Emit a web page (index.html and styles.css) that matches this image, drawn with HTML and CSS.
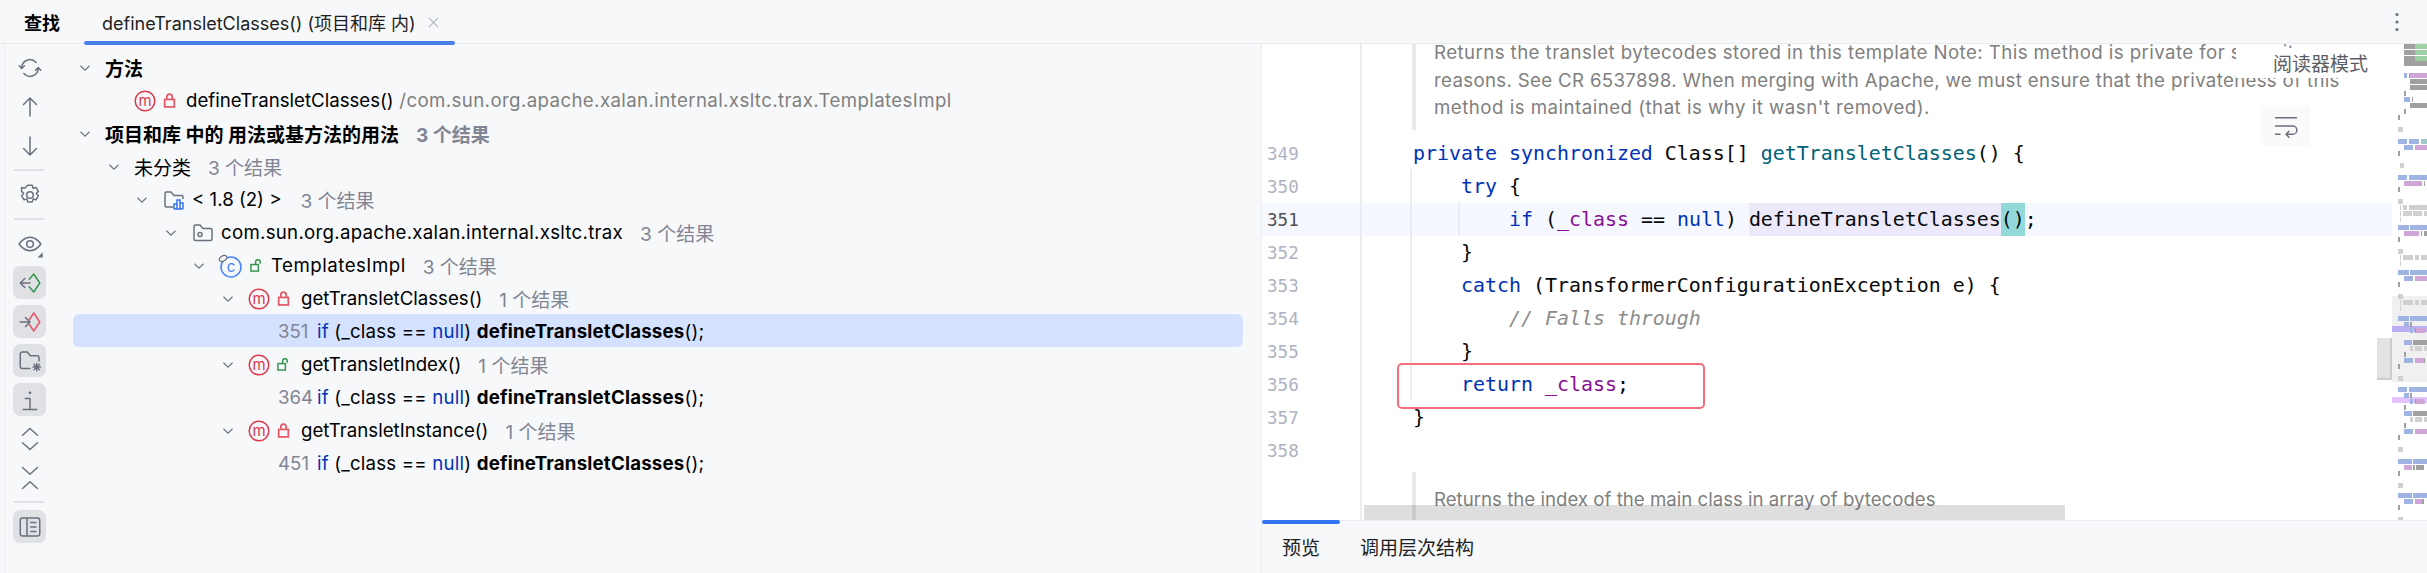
FILE: index.html
```html
<!DOCTYPE html>
<html lang="zh">
<head>
<meta charset="utf-8">
<title>查找</title>
<link rel="stylesheet" href="styles.css">
</head>
<body>
<div class="app">
  <header class="tabs">
    <span class="tab-title">查找</span>
    <div class="tab">
      <span>defineTransletClasses() (项目和库 内)</span>
      <svg class="close" viewBox="0 0 12 12"><path d="M1 1l10 10M11 1L1 11"/></svg>
    </div>
    <svg class="kebab" viewBox="0 0 4 20"><circle cx="2" cy="2.5" r="1.6"/><circle cx="2" cy="10" r="1.6"/><circle cx="2" cy="17.5" r="1.6"/></svg>
  </header>
  <main class="main">
    <section class="left">
      <nav class="rail">
        <span class="rbtn"><svg class="ic" viewBox="0 0 16 16"><path d="M13.5 8a5.5 5.5 0 0 1-9.6 3.7M2.5 8a5.5 5.5 0 0 1 9.6-3.7M.8 6.5l1.7 1.8 1.8-1.8M11.7 9.5l1.8-1.8 1.7 1.8"/></svg></span>
        <span class="rbtn"><svg class="ic" viewBox="0 0 16 16"><path d="M8 14V2M3.7 6.3L8 2l4.3 4.3"/></svg></span>
        <span class="rbtn"><svg class="ic" viewBox="0 0 16 16"><path d="M8 2v12M3.7 9.7L8 14l4.3-4.3"/></svg></span>
        <i class="sep"></i>
        <span class="rbtn"><svg class="ic" viewBox="0 0 16 16"><path d="M6.5 1.5h3l.6 2 2-.5 1.5 2.6-1.4 1.4 1.4 1.5-1.5 2.6-2-.5-.6 2h-3l-.6-2-2 .5-1.5-2.6 1.4-1.5-1.4-1.4L2.400 3l2 .5z"/><circle cx="8" cy="8" r="2.2"/></svg></span>
        <i class="sep"></i>
        <span class="rbtn"><svg class="ic" viewBox="0 0 16 16"><path d="M.8 8s2.700-4.500 7.200-4.500S15.200 8 15.200 8s-2.700 4.500-7.200 4.500S.8 8 .8 8z"/><circle cx="8" cy="8" r="2.200"/><path class="fill" d="M16.500 13.500v3.500H13z"/></svg></span>
        <span class="rbtn on"><svg class="ic" viewBox="0 0 16 16"><path d="M8 8H1.500M4.500 5l-3 3 3 3"/><path class="st-green" d="M7.500 5.500l3-3.500 4 6-4 6-3-3.500"/></svg></span>
        <span class="rbtn on"><svg class="ic" viewBox="0 0 16 16"><path d="M1.500 8H8M5 5l3 3-3 3"/><path class="st-red" d="M10.500 2l4 6-4 6-3-4.500M7.500 6.500l3-4.500"/></svg></span>
        <span class="rbtn on"><svg class="ic" viewBox="0 0 16 16"><path d="M8 13H2.800a1.300 1.300 0 0 1-1.300-1.300V3.300A1.300 1.300 0 0 1 2.800 2h3.400l2 2.500h4.500a1.300 1.300 0 0 1 1.300 1.300V8"/><path d="M12.500 9.500v5M10 12h5M10.700 10.200l3.600 3.600M14.300 10.200l-3.600 3.600"/></svg></span>
        <span class="rbtn on"><svg class="ic" viewBox="0 0 16 16"><path d="M3.500 14.300h9M8 14V7H4.800"/><circle class="fill" cx="8" cy="3.200" r=".9"/></svg></span>
        <span class="rbtn"><svg class="ic" viewBox="0 0 16 16"><path d="M3 5.500L8 1l5 4.500M3 10.500l5 4.500 5-4.500"/></svg></span>
        <span class="rbtn"><svg class="ic" viewBox="0 0 16 16"><path d="M3 1l5 4.500L13 1M3 15l5-4.500 5 4.500"/></svg></span>
        <i class="sep"></i>
        <span class="rbtn on"><svg class="ic" viewBox="0 0 16 16"><rect x="1.500" y="2" width="13" height="12" rx="1.500"/><path d="M6 2v12M8.500 5h3.500M8.500 8h3.500M8.500 11h3.500"/></svg></span>
      </nav>
      <div class="tree">
        <div class="row l0">
          <svg class="chev" viewBox="0 0 16 16"><path d="M4 6l4 4 4-4"/></svg>
          <b>方法</b>
        </div>
        <div class="row l1b">
          <svg class="mi" viewBox="0 0 22 22"><circle cx="11" cy="11" r="9.800"/><text x="11" y="15.500" text-anchor="middle">m</text></svg>
          <svg class="lock red" viewBox="0 0 12 14"><rect x="1.500" y="6" width="9" height="7"/><path d="M3.500 6V3.500a2.500 2.500 0 0 1 5 0V6"/></svg>
          <span class="name">defineTransletClasses()</span><span class="path"> /com.sun.org.apache.xalan.internal.xsltc.trax.TemplatesImpl</span>
        </div>
        <div class="row l0">
          <svg class="chev" viewBox="0 0 16 16"><path d="M4 6l4 4 4-4"/></svg>
          <b>项目和库 中的 用法或基方法的用法</b><b class="cnt">3 个结果</b>
        </div>
        <div class="row l1">
          <svg class="chev" viewBox="0 0 16 16"><path d="M4 6l4 4 4-4"/></svg>
          <span class="cjk">未分类</span><span class="cnt">3 个结果</span>
        </div>
        <div class="row l2">
          <svg class="chev" viewBox="0 0 16 16"><path d="M4 6l4 4 4-4"/></svg>
          <svg class="fi" viewBox="0 0 22 22"><path class="g" d="M10 18H3.500A1.500 1.500 0 0 1 2 16.500v-12A1.500 1.500 0 0 1 3.500 3H8l3 3.500h7.500A1.500 1.500 0 0 1 20 8v2"/><path class="b" d="M11 20v-5h3v5M14 20v-9h3v9M17 20v-6h3v6M11 20h9"/></svg>
          <span class="t18">&lt; 1.8 (2) &gt;</span><span class="cnt c18">3 个结果</span>
        </div>
        <div class="row l3">
          <svg class="chev" viewBox="0 0 16 16"><path d="M4 6l4 4 4-4"/></svg>
          <svg class="fi" viewBox="0 0 22 22"><path class="g" d="M3.500 18.500A1.500 1.500 0 0 1 2 17V4.500A1.500 1.500 0 0 1 3.500 3H8l3 3.500h7.500A1.500 1.500 0 0 1 20 8v9a1.500 1.500 0 0 1-1.500 1.500z"/><circle class="g" cx="8" cy="12.500" r="2"/></svg>
          <span class="pkg">com.sun.org.apache.xalan.internal.xsltc.trax</span><span class="cnt">3 个结果</span>
        </div>
        <div class="row l4">
          <svg class="chev" viewBox="0 0 16 16"><path d="M4 6l4 4 4-4"/></svg>
          <svg class="ci" viewBox="0 0 24 24"><circle cx="13" cy="13" r="10"/><text x="13" y="18" text-anchor="middle">c</text><ellipse cx="5" cy="4.500" rx="4" ry="2.500" transform="rotate(-30 5 4.500)"/></svg>
          <svg class="lock green" viewBox="0 0 14 14"><rect x="1" y="6" width="8" height="7"/><path d="M6 6V3.300a2.500 2.500 0 0 1 5 0V5"/></svg>
          <span class="name2">TemplatesImpl</span><span class="cnt">3 个结果</span>
        </div>
        <div class="row l5">
          <svg class="chev" viewBox="0 0 16 16"><path d="M4 6l4 4 4-4"/></svg>
          <svg class="mi" viewBox="0 0 22 22"><circle cx="11" cy="11" r="9.800"/><text x="11" y="15.500" text-anchor="middle">m</text></svg>
          <svg class="lock red" viewBox="0 0 12 14"><rect x="1.500" y="6" width="9" height="7"/><path d="M3.500 6V3.500a2.500 2.500 0 0 1 5 0V6"/></svg>
          <span class="name">getTransletClasses()</span><span class="cnt">1 个结果</span>
        </div>
        <div class="row use sel"><span class="num">351</span><span class="src"><span class="kw">if</span> (_class == <span class="kw">null</span>) <b>defineTransletClasses</b>();</span></div>
        <div class="row l5">
          <svg class="chev" viewBox="0 0 16 16"><path d="M4 6l4 4 4-4"/></svg>
          <svg class="mi" viewBox="0 0 22 22"><circle cx="11" cy="11" r="9.800"/><text x="11" y="15.500" text-anchor="middle">m</text></svg>
          <svg class="lock green" viewBox="0 0 14 14"><rect x="1" y="6" width="8" height="7"/><path d="M6 6V3.300a2.500 2.500 0 0 1 5 0V5"/></svg>
          <span class="name">getTransletIndex()</span><span class="cnt">1 个结果</span>
        </div>
        <div class="row use"><span class="num">364</span><span class="src"><span class="kw">if</span> (_class == <span class="kw">null</span>) <b>defineTransletClasses</b>();</span></div>
        <div class="row l5">
          <svg class="chev" viewBox="0 0 16 16"><path d="M4 6l4 4 4-4"/></svg>
          <svg class="mi" viewBox="0 0 22 22"><circle cx="11" cy="11" r="9.800"/><text x="11" y="15.500" text-anchor="middle">m</text></svg>
          <svg class="lock red" viewBox="0 0 12 14"><rect x="1.500" y="6" width="9" height="7"/><path d="M3.500 6V3.500a2.500 2.500 0 0 1 5 0V6"/></svg>
          <span class="name">getTransletInstance()</span><span class="cnt">1 个结果</span>
        </div>
        <div class="row use"><span class="num">451</span><span class="src"><span class="kw">if</span> (_class == <span class="kw">null</span>) <b>defineTransletClasses</b>();</span></div>
      </div>
    </section>
    <section class="right">
      <div class="editor">
        <div class="ed-main">
          <i class="strip"></i>
          <div class="doc doc1">
            <p>Returns the translet bytecodes stored in this template Note: This method is private for security</p>
            <p>reasons. See CR 6537898. When merging with Apache, we must ensure that the privateness of this</p>
            <p>method is maintained (that is why it wasn't removed).</p>
          </div>
          <div class="cl"><span class="ln">349</span><pre class="code">    <span class="kw">private synchronized</span> Class[] <span class="mth">getTransletClasses</span>() {</pre></div>
          <div class="cl"><span class="ln">350</span><pre class="code">        <span class="kw">try</span> {</pre></div>
          <div class="cl cur"><span class="ln">351</span><pre class="code">            <span class="kw">if</span> (<span class="fld">_class</span> == <span class="kw">null</span>) <span class="hl">defineTransletClasses</span><span class="br">()</span>;</pre></div>
          <div class="cl"><span class="ln">352</span><pre class="code">        }</pre></div>
          <div class="cl"><span class="ln">353</span><pre class="code">        <span class="kw">catch</span> (TransformerConfigurationException e) {</pre></div>
          <div class="cl"><span class="ln">354</span><pre class="code">            <span class="cm">// Falls through</span></pre></div>
          <div class="cl"><span class="ln">355</span><pre class="code">        }</pre></div>
          <div class="cl"><span class="ln">356</span><pre class="code">        <span class="kw">return</span> <span class="fld">_class</span>;</pre></div>
          <div class="cl"><span class="ln">357</span><pre class="code">    }</pre></div>
          <div class="cl"><span class="ln">358</span><pre class="code"> </pre></div>
          <div class="doc doc2"><p>Returns the index of the main class in array of bytecodes</p></div>
          <i class="guide g1"></i>
          <i class="guide g2"></i>
          <div class="redbox"></div>
          <div class="reader">阅读器模式</div>
          <div class="wrapbtn"><svg class="ic thin" viewBox="0 0 16 16"><path d="M1 2.500h14M1 8h11.500a2.500 2.500 0 0 1 0 5.500H8M10 11.500l-2 2 2 2M1 13.500h3"/></svg></div>
          <i class="hthumb"></i>
          <i class="vthumb"></i>
        </div>
        <svg class="minimap" viewBox="0 0 35 476">
          <rect class="mv" x="0" y="252" width="35" height="86"/>
          <rect class="mh1" x="0" y="282" width="35" height="6"/>
          <rect class="mh2" x="0" y="353" width="35" height="6"/>
          <path class="mg" d="M12 0h11v5h-11zM12 6h11v5h-11zM12 12h11v5h-11zM12 17h23v5h-23zM17 29h1v5h-1zM18 35h17v5h-17zM18 41h17v5h-17zM12 47h2v5h-2zM20 53h1v5h-1zM18 59h17v5h-17zM12 65h2v5h-2zM6 71h2v5h-2zM6 107h2v5h-2zM32 137h1v5h-1zM6 143h2v5h-2zM29 187h1v5h-1zM32 187h3v5h-3zM6 193h2v5h-2zM6 238h2v5h-2zM18 278h2v5h-2zM23 284h1v5h-1zM21 296h14v5h-14zM12 308h2v5h-2zM32 314h1v5h-1zM6 320h2v5h-2zM18 349h2v5h-2zM23 355h1v5h-1zM12 361h2v5h-2zM21 367h14v5h-14zM12 379h2v5h-2zM6 391h2v5h-2zM21 421h2v5h-2zM24 421h8v5h-8zM6 427h2v5h-2zM30 455h2v5h-2zM6 461h2v5h-2z"/>
          <path class="mn" d="M23 0h12v5h-12zM23 6h12v5h-12zM23 12h12v5h-12z"/>
          <path class="mb" d="M12 29h3v5h-3zM12 53h6v5h-6zM6 95h9v5h-9zM17 95h10v5h-10zM12 101h9v5h-9zM6 131h9v5h-9zM17 131h18v5h-18zM6 181h11v5h-11zM18 181h17v5h-17zM6 226h11v5h-11zM18 226h17v5h-17zM12 232h9v5h-9zM6 272h11v5h-11zM18 272h17v5h-17zM12 278h5v5h-5zM18 284h3v5h-3zM12 296h8v5h-8zM12 314h9v5h-9zM6 343h9v5h-9zM17 343h18v5h-18zM12 349h5v5h-5zM18 355h3v5h-3zM12 367h8v5h-8zM12 385h9v5h-9zM6 415h14v5h-14zM21 415h14v5h-14zM6 449h14v5h-14zM21 449h14v5h-14zM12 455h9v5h-9z"/>
          <path class="mt" d="M29 95h6v5h-6z"/>
          <path class="mp" d="M18 29h17v5h-17zM23 101h12v5h-12zM12 137h18v5h-18zM12 187h15v5h-15zM23 232h12v5h-12zM24 284h9v5h-9zM23 314h9v5h-9zM24 355h9v5h-9zM23 385h12v5h-12zM12 421h8v5h-8zM23 455h7v5h-7z"/>
          <path class="ml" d="M6 83h5v5h-5zM8 119h4v5h-4zM6 155h5v5h-5zM8 161h1v5h-1zM11 161h4v5h-4zM17 161h18v5h-18zM8 167h1v5h-1zM11 167h9v5h-9zM21 167h9v5h-9zM32 167h3v5h-3zM8 173h1v5h-1zM6 205h5v5h-5zM8 211h1v5h-1zM11 211h10v5h-10zM23 211h4v5h-4zM29 211h6v5h-6zM8 217h1v5h-1zM6 250h5v5h-5zM8 256h1v5h-1zM11 256h10v5h-10zM23 256h4v5h-4zM29 256h6v5h-6zM8 262h1v5h-1zM18 302h3v5h-3zM23 302h7v5h-7zM32 302h3v5h-3zM6 332h5v5h-5zM18 373h3v5h-3zM23 373h7v5h-7zM32 373h3v5h-3zM6 403h5v5h-5zM6 439h5v5h-5zM6 473h5v3h-5z"/>
        </svg>
      </div>
      <div class="bottom">
        <span class="btab on">预览</span>
        <span class="btab">调用层次结构</span>
      </div>
    </section>
  </main>
</div>
</body>
</html>
```
FILE: styles.css
```css
* { box-sizing: border-box; }
html, body { margin: 0; padding: 0; }
body {
  width: 2427px;
  height: 573px;
  overflow: hidden;
  background: #f7f8fa;
  color: #000;
  font-family: Inter, "Noto Sans CJK SC", sans-serif;
  font-size: 18.67px;
}
.app { width: 2427px; height: 573px; display: flex; flex-direction: column; }

/* top tabs */
.tabs {
  height: 44px;
  flex: none;
  display: flex;
  align-items: center;
  border-bottom: 1px solid #ebecf0;
  padding-left: 24px;
}
.tab-title { font-weight: 700; font-size: 18px; width: 60px; }
.tab {
  position: relative;
  height: 44px;
  width: 371px;
  display: flex;
  align-items: center;
  padding: 0 0 0 18px;
  color: #1e1f22;
  font-size: 18px;
}
.tab::after {
  content: "";
  position: absolute;
  left: 0; right: 0; bottom: -1px;
  height: 4px;
  border-radius: 2px;
  background: #4a80ea;
}
.close { position: absolute; left: 344px; top: 17px; width: 11px; height: 11px; }
.close path { stroke: #b4b8bf; stroke-width: 1.3; fill: none; }
.kebab { margin-left: auto; margin-right: 28px; width: 4px; height: 20px; }
.kebab circle { fill: #6c707e; }

.main { flex: 1; display: flex; min-height: 0; }

/* left pane */
.left {
  width: 1262px;
  flex: none;
  display: flex;
  border-right: 1px solid #ebecf0;
}
.rail {
  width: 46px;
  flex: none;
  margin-left: 4px;
  border-left: 1px solid #ebecf0;
  padding: 7px 0 0 8px;
  display: flex;
  flex-direction: column;
  gap: 6px;
}
.rbtn { width: 33px; height: 33px; flex: none; display: flex; align-items: center; justify-content: center; border-radius: 7px; }
.rbtn.on { background: #dfe1e5; }
.sep { display: block; flex: none; width: 30px; height: 2px; margin: 1px 0 1px 1px; background: #dfe1e5; }
.ic { width: 24px; height: 24px; overflow: visible; fill: none; stroke: #6c707e; stroke-width: 1; stroke-linejoin: round; stroke-linecap: round; }
.ic .fill { fill: #6c707e; stroke: none; }
.ic .st-green { stroke: #369650; }
.ic .st-red { stroke: #e55765; }

.tree { width: 1170px; margin-left: 23px; padding-top: 6px; flex: none; }
.row { height: 33px; padding-top: 2px; display: flex; align-items: center; white-space: pre; border-radius: 6px; }
.row b { font-weight: 700; font-size: 19px; }
.cjk { font-size: 19px; }
.l0 { padding-left: 3px; }
.l1 { padding-left: 32px; }
.l1b { padding-left: 61px; }
.l2 { padding-left: 60px; }
.l3 { padding-left: 89px; }
.l4 { padding-left: 117px; }
.l5 { padding-left: 146px; }
.chev { width: 18px; height: 18px; flex: none; margin-right: 11px; fill: none; stroke: #6c707e; stroke-width: 1; }
.mi { width: 22px; height: 22px; flex: none; margin-right: 7px; overflow: visible; }
.mi circle { fill: none; stroke: #db3b4b; stroke-width: 1.5; }
.mi text { fill: #db3b4b; font-family: Inter, sans-serif; font-size: 15px; }
.lock { height: 15px; width: 13px; flex: none; margin-right: 10px; fill: none; stroke-width: 1.6; }
.l5 .lock { margin-right: 11px; }
.lock.red { stroke: #e55765; }
.lock.green { stroke: #369650; }
.fi { width: 22px; height: 22px; flex: none; margin-left: 1px; margin-right: 7px; fill: none; stroke-width: 1.5; }
.fi .g { stroke: #6c707e; }
.fi .b { stroke: #3574f0; }
.ci { width: 24px; height: 24px; flex: none; margin-left: -1px; margin-right: 8px; overflow: visible; }
.ci circle { fill: none; stroke: #4682fa; stroke-width: 1.5; }
.ci text { fill: #4682fa; font-family: Inter, sans-serif; font-size: 15px; }
.ci ellipse { fill: #f7f8fa; stroke: #6c707e; stroke-width: 1.2; }
.l4 .lock { margin-right: 8px; }
.cnt { margin-left: 17px; color: #818594; font-size: 19px; }
.row b.cnt { color: #818594; margin-left: 17px; }
.c18 { margin-left: 19px; }
.path { color: #808080; letter-spacing: .39px; }
.pkg { letter-spacing: .28px; }
.name2 { letter-spacing: .5px; }
.use { padding-left: 205px; color: #000; }
.sel { background: #d4e2ff; }
.num { color: #818594; width: 39px; flex: none; }
.src { letter-spacing: .2px; }
.src b { letter-spacing: .2px; }
.row.use b { font-size: 18.67px; }
.kw { color: #0033b3; }

/* right pane */
.right { flex: 1; min-width: 0; display: flex; flex-direction: column; }
.editor { height: 476px; flex: none; display: flex; background: #fff; overflow: hidden; }
.ed-main { position: relative; width: 1130px; flex: none; overflow: hidden; }
.minimap { width: 35px; height: 476px; flex: none; display: block; }
.mv { fill: #f0f0f0; }
.mh1 { fill: #bcaef0; }
.mh2 { fill: #e0c4fa; }
.mg { fill: #a0a0a0; }
.mn { fill: #9fcfa5; }
.mb { fill: #a0b4e4; }
.mt { fill: #a0c8c8; }
.mp { fill: #d0a5d8; }
.ml { fill: #d0d0d0; }

.strip { position: absolute; left: 98px; top: 0; bottom: 0; width: 2px; background: #ebecf0; z-index: 2; }
.doc {
  margin-left: 150px;
  border-left: 4px solid #e8e9ec;
  padding-left: 18px;
  color: #7f7f7f;
  font-size: 18.67px;
  white-space: nowrap;
}
.doc p { margin: 0; height: 27px; line-height: 27px; }
.doc1 { height: 86px; margin-bottom: 7px; letter-spacing: .33px; }
.doc1 p:first-child { height: 18px; line-height: 18px; margin-bottom: 5px; letter-spacing: .43px; }
.doc1 p:last-child { letter-spacing: .49px; }
.doc2 { height: 48px; margin-top: 5px; padding-top: 14px; }

.cl { height: 33px; display: flex; align-items: center; }
.cur { background: #f5f8fe; }
.ln {
  width: 98px;
  flex: none;
  padding-left: 5px;
  font-family: "DejaVu Sans Mono", monospace;
  font-size: 17.6px;
  color: #aeb3c2;
}
.cur .ln { color: #4e5157; }
.code {
  margin: 0 0 0 5px;
  height: 33px;
  line-height: 33px;
  font-family: "DejaVu Sans Mono", monospace;
  font-size: 19.93px;
  color: #080808;
  white-space: pre;
}
.mth { color: #00627a; }
.fld { color: #871094; }
.cm { color: #8c8c8c; font-style: italic; }
.hl { display: inline-block; height: 33px; background: #ece9fb; }
.br { display: inline-block; height: 33px; background: #93d9d9; }

.guide { position: absolute; width: 2px; background: #ebecf0; }
.g1 { left: 148px; top: 125px; height: 231px; }
.g2 { left: 196px; top: 158px; height: 33px; }
.redbox {
  position: absolute;
  left: 135px;
  top: 319px;
  width: 308px;
  height: 46px;
  border: 2px solid #f56c7c;
  border-radius: 5px;
}
.reader {
  position: absolute;
  left: 974px;
  top: 4px;
  width: 156px;
  height: 30px;
  background: #fff;
  padding-left: 37px;
  font-size: 19px;
  line-height: 34px;
  color: #5a5d66;
}
.wrapbtn {
  position: absolute;
  left: 998px;
  top: 61px;
  width: 51px;
  height: 41px;
  border-radius: 5px;
  background: #fafafa;
  display: flex;
  align-items: center;
  justify-content: center;
}
.thin { stroke-width: 1; }
.hthumb { position: absolute; left: 102px; top: 461px; width: 701px; height: 15px; background: rgba(0, 0, 0, .13); }
.vthumb { position: absolute; left: 1115px; top: 294px; width: 15px; height: 42px; background: #e2e2e2; border-right: 2px solid #ccc; border-bottom: 2px solid #ccc; }

.bottom { flex: 1; display: flex; border-top: 1px solid #ebecf0; background: #f7f8fa; }
.btab { position: relative; padding: 0 20px; line-height: 56px; font-size: 19px; color: #1e1f22; }
.btab.on::after {
  content: "";
  position: absolute;
  left: 0; right: 0; top: -1px;
  height: 4px;
  border-radius: 2px;
  background: #3574f0;
}
```
